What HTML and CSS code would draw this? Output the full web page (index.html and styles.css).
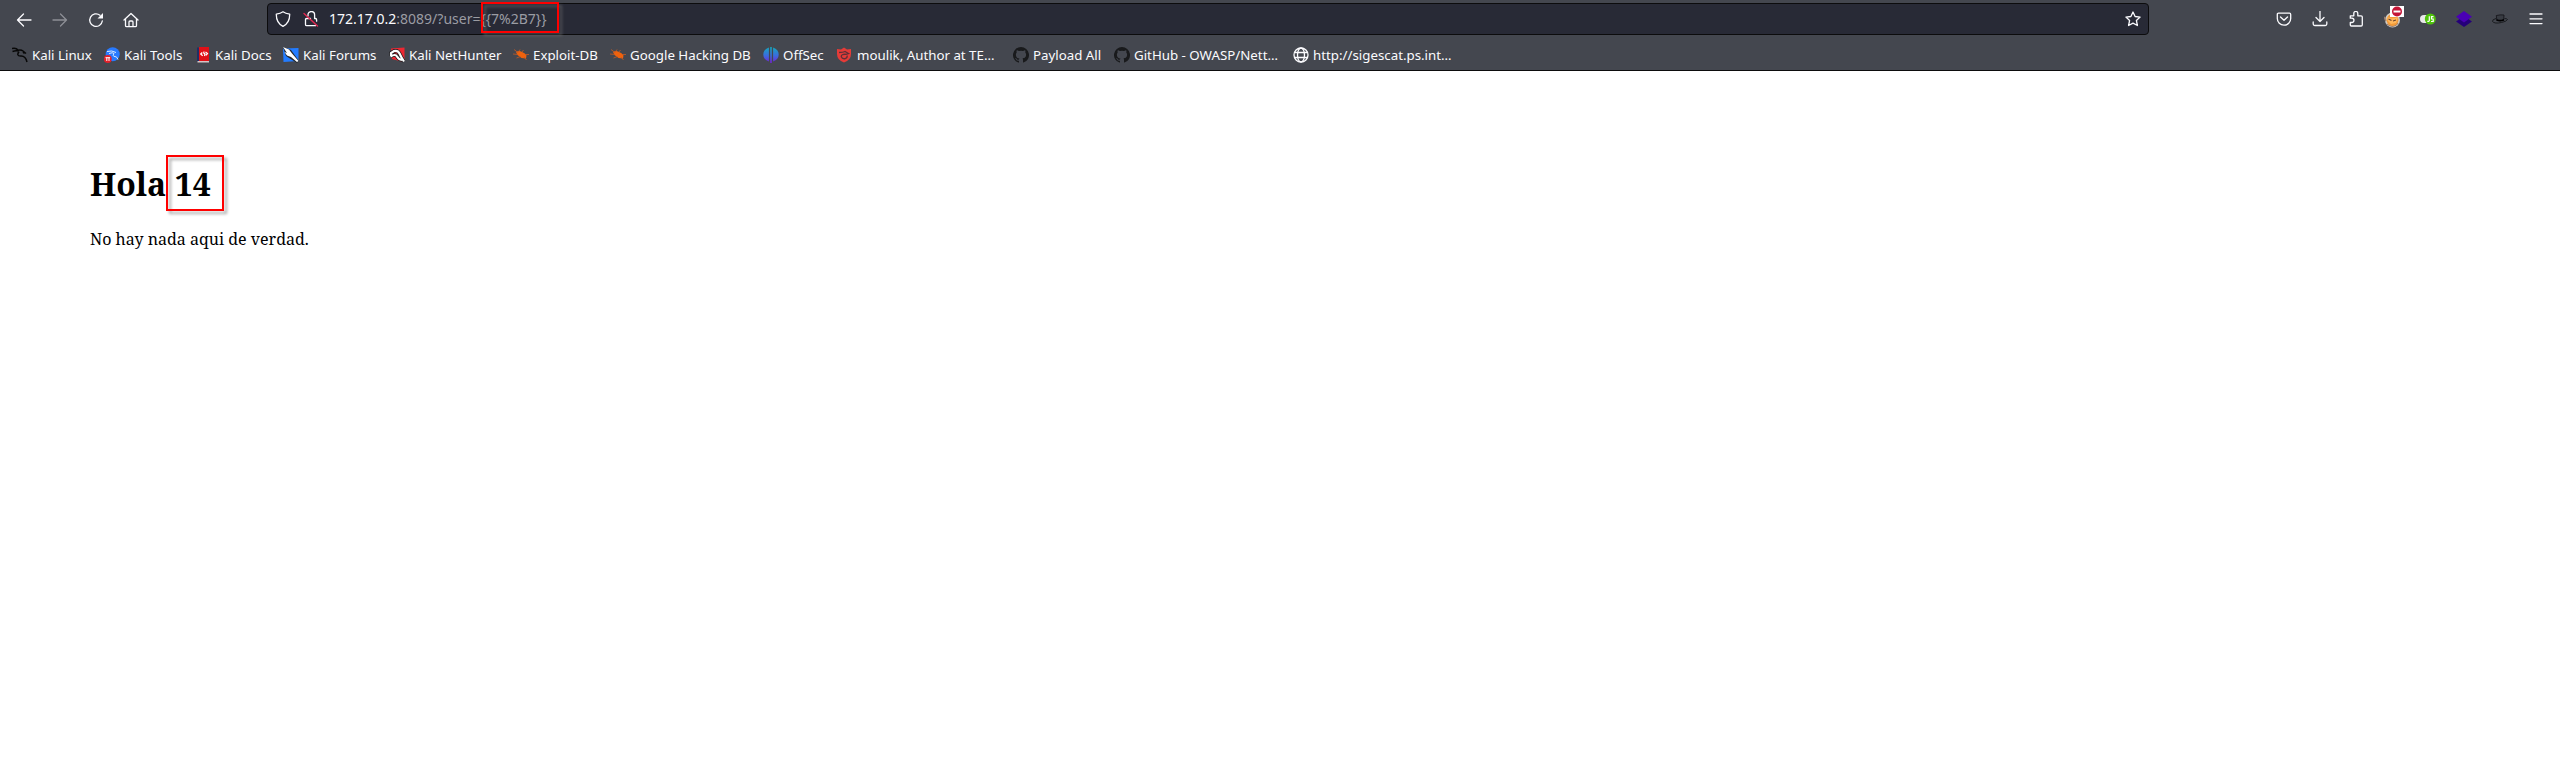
FILE: index.html
```html
<!DOCTYPE html>
<html lang="es">
<head>
<meta charset="utf-8">
<title>Hola</title>
<link rel="stylesheet" href="styles.css">
</head>
<body>
<header class="chrome">
  <div class="toolbar">
    <nav class="nav">
      <svg class="ico" viewBox="0 0 16 16"><path d="M15 8H1.5M7.500 2L1.500 8l6 6"/></svg>
      <svg class="ico dim" viewBox="0 0 16 16"><path d="M1 8h13.500M8.500 2l6 6-6 6"/></svg>
      <svg class="ico" viewBox="0 0 16 16"><path d="M14.300 9A6.300 6.300 0 1 1 12 3.200"/><path class="solid" d="M15 1v5.500H9.500z"/></svg>
      <svg class="ico home" viewBox="0 0 16 16"><path d="M1 8l7-6.500L15 8M2.500 7v6.500q0 1.200 1.200 1.200h8.600q1.200 0 1.200-1.200V7M6 14.500V10q0-1 1-1h2q1 0 1 1v4.500"/></svg>
    </nav>
    <div class="urlbar">
      <svg class="ico shield" viewBox="0 0 16 16"><path d="M8 .8c2 1.500 4 2 6.700 2.300C14.800 9 12.800 13 8 15.300 3.200 13 1.200 9 1.300 3.100 4 2.800 6 2.300 8 .8z"/></svg>
      <svg class="ico lock" viewBox="0 0 16 16"><path d="M5 5V3.800a3.300 3.300 0 0 1 6.600 0V7.500h.8q1.200 0 1.200 1.200v1.500M7.500 7.500H3.700q-1.200 0-1.200 1.200v4.800q0 1.200 1.200 1.200h8.800"/><path class="slash" d="M1 2.500L14.500 15"/></svg>
      <span class="url"><b>172.17.0.2</b>:8089/?user={{7%2B7}}</span>
      <svg class="ico star" viewBox="0 0 16 16"><path d="M8 1l2.100 4.500 5 .6-3.700 3.400 1 5L8 12.100l-4.400 2.400 1-5L.9 6.100l5-.6z"/></svg>
    </div>
    <div class="actions">
      <svg class="ico" viewBox="0 0 16 16"><path d="M2.500 2.200h11q1.200 0 1.200 1.200V7.500a6.700 6.700 0 0 1-13.400 0V3.400q0-1.200 1.200-1.200zM4.500 6L8 9.300 11.500 6"/></svg>
      <svg class="ico" viewBox="0 0 16 16"><path d="M8 0v10.500M4 6.500l4 4 4-4M1.200 11v2q0 1.500 1.500 1.500h10.600q1.500 0 1.500-1.500v-2"/></svg>
      <svg class="ico" viewBox="0 0 16 16"><path d="M2.300 7.200V4.800h3.500V2.400a2 2 0 0 1 4 0v2.400h3.300q1.200 0 1.200 1.200v7.800q0 1.200-1.200 1.200H3.500q-1.200 0-1.200-1.200V11.500h1.500a2.150 2.150 0 0 0 0-4.300z"/></svg>
      <svg class="pic raised" viewBox="0 0 20 22"><circle cx="8.500" cy="14" r="7.500" fill="#d2cdc6"/><path d="M1 11q-1 1 1 4M3 18q6 5 11-1" stroke="#9b8172" stroke-width="1.500" fill="none"/><circle cx="8.500" cy="14" r="6" fill="#f29a38"/><path d="M3 11l4 1.500 4-.5 3-1-2 6-5 1-3-3z" fill="#ffb75c"/><path d="M4.500 13l3 1.500M9 15l3-1" stroke="#69442e" stroke-width="1.200"/><path fill="#fff" d="M6 0h14v11H6z"/><circle cx="13" cy="5.500" r="5" fill="#c41436"/><path fill="#fff" d="M9.500 4.500h7v2h-7z"/></svg>
      <svg class="pic" viewBox="0 0 16 16"><rect x="0" y="4" width="13" height="8" rx="4" fill="#e9e9e9"/><circle cx="10.300" cy="8" r="5.500" fill="#4fc40b"/><path d="M9.300 5.200v4.200q0 1.200-2 1M13.500 5.600h-2V8h1.700v2.500h-2.200" stroke="#fff" stroke-width="1.200" fill="none"/></svg>
      <svg class="pic" viewBox="0 0 16 16"><path fill="#250079" d="M0 10.500L8 5l8 5.500L8 16z"/><path fill="#4a00b4" d="M0 5.800L8 0l8 5.800-8 5.700z"/></svg>
      <svg class="pic" viewBox="0 0 16 16"><path d="M4 7.500Q0 8.500.5 10.500q2 2.500 9 1 5-1 6-3-.5-1-3-1" fill="none" stroke="#15161a" stroke-width=".9"/><path fill="#383b42" stroke="#111216" stroke-width=".8" d="M4.800 9L4.300 4.500q4-1 7.700-.5l-.3 5Q8 10.500 4.800 9z"/><path d="M4.500 9q4 1.500 7.500-.3" stroke="#000" stroke-width="1.800" fill="none"/></svg>
      <svg class="ico" viewBox="0 0 16 16"><path d="M2 3h12M2 7.800h12M2 12.600h12"/></svg>
    </div>
    <div class="mark mark-url"></div>
  </div>
  <div class="bookmarks">
    <a><svg class="fav" viewBox="0 0 16 16"><path d="M0 1.500q4-1 6 1.500M.5 4.500q3-1 5.500-.5M5 3.500q4-1 6 .5l3 2.500M7 4.500Q4 9 8.500 9q5-.5 6.500 6M11 5l1.500 1.500" fill="none" stroke="#080808" stroke-width="1.500"/></svg><span>Kali Linux</span></a>
    <a><svg class="fav" viewBox="0 0 16 16"><circle cx="8.700" cy="7.300" r="7" fill="#287aff"/><path d="M3 4.500q5-1.500 9 1M5 6.500q4-1.500 5 0-2 3 1 3 2 0 3 3" fill="none" stroke="#dcecff"/><circle cx="3.800" cy="12" r="3.900" fill="#e3202a"/><path d="M1.500 10.700h4.600M2.800 10.700V14M5 10.700V14" stroke="#fff"/></svg><span>Kali Tools</span></a>
    <a><svg class="fav" viewBox="0 0 16 16"><path fill="#202f65" d="M2 .5h2.500v14H2z"/><path fill="#df1017" d="M4 0h10v14H4z"/><path fill="#d4c5c6" d="M2.500 14H14v1.500H2.500z"/><path d="M7.300 5.500L5.700 7l2 1.800M10.500 5l2 1.500-1.600 1.800M9 4.500L8.700 6l1.300 1-.5 2" fill="none" stroke="#fff" stroke-width="1.200"/></svg><span>Kali Docs</span></a>
    <a><svg class="fav" viewBox="0 0 16 16"><path fill="#237cff" d="M0 1.500L15.500 1v13L.5 15z"/><path fill="#24282d" d="M0 0l8 3 8 11-2 2L3 9z"/><path fill="#fff" d="M0 0l6 2.500 3 4L15.500 14l-1.500 1-6-5-4-1.500L1.500 5 4 6z"/></svg><span>Kali Forums</span></a>
    <a><svg class="fav" viewBox="0 0 16 16"><path fill="#ed2732" d="M2 1.500l13.500-1v12l-3 2L3 12z"/><path d="M2 9V6L5 4q4-1 5.500 2.500Q12 10 15 14.500M1.500 9.500q5-3 6.500 0T13 13" fill="none" stroke="#17171a" stroke-width="3.600"/><path d="M2 9V6L5 4q4-1 5.500 2.500Q12 10 15 14.500M1.500 9.500q5-3 6.500 0T13 13" fill="none" stroke="#fff" stroke-width="2.200"/></svg><span>Kali NetHunter</span></a>
    <a><svg class="fav bug" viewBox="0 0 16 16"><path d="M3 5q3-2 5.500-.3 3.500 1 5 3.800l-.5 3-4.500-.5-4-3z"/><path class="legs" d="M1 2.500l4 3 2-3M0 7l5 .5M3.500 11l4-1.500M9 5l1.500-2M12 7.500h4M11 10l2.500 3"/></svg><span>Exploit-DB</span></a>
    <a><svg class="fav bug" viewBox="0 0 16 16"><path d="M3 5q3-2 5.500-.3 3.500 1 5 3.800l-.5 3-4.500-.5-4-3z"/><path class="legs" d="M1 2.500l4 3 2-3M0 7l5 .5M3.500 11l4-1.500M9 5l1.500-2M12 7.500h4M11 10l2.500 3"/></svg><span>Google Hacking DB</span></a>
    <a><svg class="fav" viewBox="0 0 16 16"><defs><linearGradient id="off" x2="0" y2="1"><stop stop-color="#13aabd"/><stop offset=".55" stop-color="#3c6add"/><stop offset="1" stop-color="#7520d7"/></linearGradient></defs><path fill="url(#off)" d="M5.900.5v14Q.3 12.500.3 7.500T5.900.5zM7.200 0h1.600v16H7.200zM10.100.5q5.600 2.200 5.600 7t-5.600 7z"/></svg><span>OffSec</span></a>
    <a><svg class="fav" viewBox="0 0 16 16"><path fill="#e53b38" d="M1 2l4 .5L8 .5l3 2 4-.5v5q0 6-7 8.500Q1 13 1 7z"/><path d="M3 5.500q4 0 6-1l3.500 2-2.500.8Q5 7 5.300 9.800q1 2.500 4 1.800 2.500-1 1.700-3" fill="none" stroke="#5f3138" stroke-width="1.300"/></svg><span class="wide">moulik, Author at TE…</span></a>
    <a><svg class="fav" viewBox="0 0 16 16"><path class="octo" d="M8 0a8 8 0 0 0-2.500 15.600c.4.100.5-.2.500-.4v-1.500c-2.200.5-2.700-.9-2.700-.9-.4-.9-.9-1.200-.9-1.200-.7-.5.1-.5.1-.5.8.1 1.200.8 1.200.8.700 1.300 1.900.9 2.300.7.100-.5.300-.9.500-1.100-1.800-.2-3.600-.9-3.600-4 0-.9.300-1.600.8-2.100-.1-.2-.4-1 .1-2.100 0 0 .7-.2 2.200.8a7.500 7.500 0 0 1 4 0c1.500-1 2.200-.8 2.200-.8.400 1.100.2 1.900.1 2.100.5.600.8 1.300.8 2.100 0 3.100-1.900 3.700-3.600 3.900.3.300.5.800.5 1.500v2.300c0 .2.100.5.500.4A8 8 0 0 0 8 0z"/></svg><span>Payload All</span></a>
    <a><svg class="fav" viewBox="0 0 16 16"><path class="octo" d="M8 0a8 8 0 0 0-2.500 15.600c.4.100.5-.2.500-.4v-1.500c-2.200.5-2.700-.9-2.700-.9-.4-.9-.9-1.200-.9-1.200-.7-.5.1-.5.1-.5.8.1 1.200.8 1.200.8.700 1.300 1.900.9 2.300.7.100-.5.300-.9.500-1.100-1.800-.2-3.600-.9-3.600-4 0-.9.300-1.600.8-2.100-.1-.2-.4-1 .1-2.100 0 0 .7-.2 2.200.8a7.500 7.500 0 0 1 4 0c1.500-1 2.200-.8 2.200-.8.400 1.100.2 1.900.1 2.100.5.600.8 1.300.8 2.100 0 3.100-1.900 3.700-3.600 3.900.3.300.5.800.5 1.500v2.300c0 .2.100.5.500.4A8 8 0 0 0 8 0z"/></svg><span>GitHub - OWASP/Nett…</span></a>
    <a><svg class="fav" viewBox="0 0 16 16"><g fill="none" stroke="#fbfbfe" stroke-width="1.300"><circle cx="8" cy="8" r="7"/><ellipse cx="8" cy="8" rx="3.500" ry="7"/><path d="M1.500 5.500h13M1.500 10.500h13"/></g></svg><span>http://sigescat.ps.int…</span></a>
  </div>
</header>
<main class="page">
  <h1>Hola 14</h1>
  <p>No hay nada aqui de verdad.</p>
  <div class="mark mark-result"></div>
</main>
</body>
</html>
```

FILE: styles.css
```css
* { box-sizing: border-box; }
body { margin: 0; background: #fff; overflow: hidden; }
.chrome {
  height: 71px;
  background: #44474f;
  border-bottom: 1px solid #0c0c0d;
  font-family: "Noto Sans", sans-serif;
  color: #fbfbfe;
}
.toolbar { position: relative; height: 38px; display: flex; align-items: flex-start; }
.nav { width: 267px; padding: 12px 0 0 16px; display: flex; gap: 20px; }
.home { margin-left: -1px; }
.ico {
  width: 16px; height: 16px; flex: none;
  fill: none; stroke: #fbfbfe; stroke-width: 1.3;
  stroke-linecap: round; stroke-linejoin: round;
}
.dim { opacity: .4; }
.solid { fill: #fbfbfe; stroke: none; }
.slash { stroke: #e22850; stroke-width: 1.4; }
.urlbar {
  width: 1882px; height: 32px; margin-top: 3px; padding: 0 7px;
  display: flex; align-items: center;
  background: #282a36; border: 1px solid #0c0c0d; border-radius: 4px;
}
.lock { margin-left: 12px; }
.url { flex: 1; margin-left: 10px; font-size: 14px; line-height: 18px; color: #9b9ca3; white-space: pre; }
.url b { font-weight: 400; color: #fbfbfe; }
.actions { display: flex; gap: 20px; padding: 11px 0 0 127px; }
.pic { width: 16px; height: 16px; flex: none; }
.raised { width: 20px; height: 22px; margin: -5px -4px 0 0; }
.bookmarks {
  height: 33px; padding-left: 12px; padding-top: 1px;
  display: grid; align-items: center;
  grid-template-columns: 92px 91px 88px 106px 124px 97px 153px 73px 177px 101px 179px 170px;
}
.bookmarks a { display: flex; align-items: center; gap: 4px; font-size: 13.3px; line-height: 18px; white-space: nowrap; }
.fav { width: 16px; height: 16px; flex: none; }
.wide { margin-left: 1px; }
.bug { fill: #f0620d; }
.legs { fill: none; stroke: #c45a24; stroke-width: .8; }
.octo { fill: #191a1c; }
.page {
  position: relative; padding: 91px 90px 0;
  font-family: "Noto Serif", "Droid Serif", "DejaVu Serif Condensed", "DejaVu Serif", serif;
  color: #000;
}
.page h1 { margin: 0; font-size: 32px; line-height: 44px; }
.page p { margin: 22px 0 0; font-size: 16px; line-height: 22px; }
.mark {
  position: absolute;
  border: 2px solid #f00;
  filter: drop-shadow(3px 3px 1.5px rgba(110, 110, 110, .6));
}
.mark-url { left: 481px; top: 2px; width: 78px; height: 31px; }
.mark-result { left: 166px; top: 84px; width: 58px; height: 56px; }
```
